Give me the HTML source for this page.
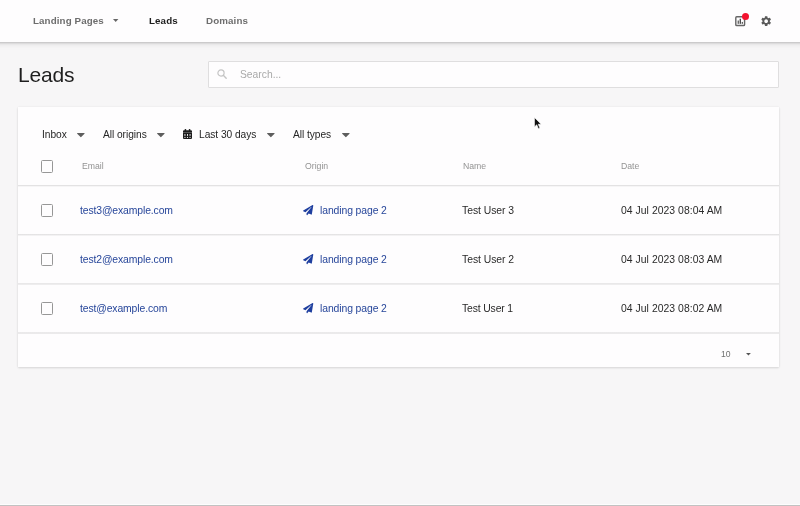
<!DOCTYPE html>
<html lang="en">
<head>
<meta charset="utf-8">
<title>Leads</title>
<style>
*{box-sizing:border-box;margin:0;padding:0}
html,body{width:800px;height:506px;overflow:hidden}
body{position:relative;background:#f7f6f7;font-family:"Liberation Sans",sans-serif;color:#222;-webkit-font-smoothing:antialiased}
.abs{position:absolute;white-space:nowrap;line-height:1;will-change:transform}
#topbar{position:absolute;left:-20px;top:0;width:840px;height:42px;background:#fefdfe;box-shadow:0 1px 2px rgba(0,0,0,.175),0 2px 6px rgba(0,0,0,.10)}
.nav{font-size:9.750px;letter-spacing:.12px;font-weight:bold;color:#6d6d6d;top:16px}
.nav.active{color:#1d1d1d}
h1{font-weight:normal;font-size:21px;letter-spacing:-.2px;color:#1e1e1e;left:18.300px;top:64px}
#search{position:absolute;left:208px;top:61px;width:571px;height:27px;background:#fefdfe;border:1px solid #dfdedf;border-radius:1px}
#search span{will-change:transform;position:absolute;left:31.300px;top:8px;font-size:10.300px;color:#a9a9a9;line-height:1}
#card{position:absolute;left:18px;top:107px;width:761px;height:260px;background:#fefdfe;box-shadow:0 1px 2px rgba(0,0,0,.12),0 0 2px rgba(0,0,0,.06)}
.filter{font-size:10.200px;letter-spacing:-.04px;color:#262626;top:130px}
.th{font-size:8.700px;color:#939393;top:162px}
.hr{position:absolute;left:18px;width:761px;height:2px}
.cb{position:absolute;left:40.700px;width:12.500px;height:12.400px;margin-top:.2px;border:1.500px solid #979797;border-radius:1.500px;background:#fefdfe}
.td{font-size:10.400px;color:#2a2a2a}
.c1{letter-spacing:-.12px}.c2{letter-spacing:-.1px}.c3{letter-spacing:-.04px}.c4{letter-spacing:.04px}
.link{color:#27469a}
.r1{top:206px}.r2{top:255px}.r3{top:304px}
svg{position:absolute;overflow:visible}
#bottomline1{position:absolute;left:0;top:504px;width:800px;height:1px;background:#fdfdfd}
#bottomline2{position:absolute;left:0;top:505px;width:800px;height:1px;background:#c2c2c2}
</style>
</head>
<body>
<div id="topbar"></div>
<div class="abs nav" style="left:33px">Landing Pages</div>
<svg style="left:112.700px;top:19.100px" width="5.400" height="2.900" viewBox="0 0 5.400 2.900"><path d="M0 0h5.400L2.700 2.900z" fill="#666"/></svg>
<div class="abs nav active" style="left:149px">Leads</div>
<div class="abs nav" style="left:206px">Domains</div>

<!-- report icon -->
<svg style="left:734.900px;top:15.700px" width="11.330" height="11.330" viewBox="0 0 12 12">
  <rect x="0.850" y="0.850" width="9.300" height="9.300" rx="1" fill="none" stroke="#666" stroke-width="1.500"/>
  <rect x="2.800" y="4.800" width="1.300" height="3.500" fill="#555"/>
  <rect x="4.900" y="2.900" width="1.400" height="5.400" fill="#444"/>
  <rect x="7.100" y="6.300" width="1.300" height="2" fill="#555"/>
</svg>
<div style="position:absolute;left:742px;top:13px;width:7px;height:7px;border-radius:50%;background:#f3132f"></div>
<!-- gear icon -->
<svg style="left:759.950px;top:14.500px" width="12.300" height="12.300" viewBox="0 0 24 24">
  <path fill="#5a5a5a" d="M19.14 12.94c.04-.3.06-.61.06-.94 0-.32-.02-.64-.07-.94l2.03-1.58a.49.49 0 0 0 .12-.61l-1.92-3.32a.488.488 0 0 0-.59-.22l-2.39.96c-.5-.38-1.03-.7-1.62-.94l-.36-2.54a.484.484 0 0 0-.48-.41h-3.84c-.24 0-.43.17-.47.41l-.36 2.54c-.59.24-1.13.57-1.62.94l-2.39-.96c-.22-.08-.47 0-.59.22L2.74 8.87c-.12.21-.08.47.12.61l2.03 1.58c-.05.3-.09.63-.09.94s.02.64.07.94l-2.03 1.58a.49.49 0 0 0-.12.61l1.92 3.32c.12.22.37.29.59.22l2.39-.96c.5.38 1.03.7 1.62.94l.36 2.54c.05.24.24.41.48.41h3.84c.24 0 .44-.17.47-.41l.36-2.54c.59-.24 1.13-.56 1.62-.94l2.39.96c.22.08.47 0 .59-.22l1.92-3.32c.12-.22.07-.47-.12-.61l-2.01-1.58zM12 15.6c-1.98 0-3.600-1.62-3.600-3.600s1.62-3.600 3.600-3.600 3.600 1.62 3.600 3.600-1.62 3.600-3.600 3.600z"/>
</svg>

<h1 class="abs">Leads</h1>
<div id="search">
  <svg style="left:7.800px;top:7.300px" width="10" height="10" viewBox="0 0 10 10"><circle cx="4" cy="4" r="3.100" fill="none" stroke="#c4c4c4" stroke-width="1.200"/><path d="M6.300 6.300 L9.200 9.200" stroke="#c4c4c4" stroke-width="1.400" stroke-linecap="round"/></svg>
  <span>Search...</span>
</div>

<div id="card"></div>
<div class="abs filter" style="left:42px">Inbox</div>
<svg style="left:77.2px;top:132.700px" width="7.700" height="4.300" viewBox="0 0 7.200 4.400" preserveAspectRatio="none"><path d="M.5 0h6.200a.4.400 0 0 1 .3.700L3.900 4.100a.4.400 0 0 1-.6 0L.2.700A.4.400 0 0 1 .5 0z" fill="#5e5e5e"/></svg>
<div class="abs filter" style="left:103px">All origins</div>
<svg style="left:157.2px;top:132.700px" width="7.700" height="4.300" viewBox="0 0 7.200 4.400" preserveAspectRatio="none"><path d="M.5 0h6.200a.4.400 0 0 1 .3.700L3.900 4.100a.4.400 0 0 1-.6 0L.2.700A.4.400 0 0 1 .5 0z" fill="#5e5e5e"/></svg>
<!-- calendar -->
<svg style="left:182.900px;top:129px" width="9" height="10.100" viewBox="0 0 9 10.100">
  <path fill="#1c1c1c" d="M1 1.300h7a1 1 0 0 1 1 1V3.400H0V2.300a1 1 0 0 1 1-1zM0 3.700h9V9.100a1 1 0 0 1-1 1H1a1 1 0 0 1-1-1z"/>
  <rect x="1.700" y="0" width="1.400" height="2.200" rx=".4" fill="#1c1c1c"/>
  <rect x="5.900" y="0" width="1.400" height="2.200" rx=".4" fill="#1c1c1c"/>
  <g fill="#fefdfe"><rect x="1.500" y="5" width=".9" height="1.900"/><rect x="4.050" y="5" width=".9" height="1.900"/><rect x="6.600" y="5" width=".9" height="1.900"/><rect x="1.400" y="7.900" width="1.100" height="1"/><rect x="3.950" y="7.900" width="1.100" height="1"/><rect x="6.500" y="7.900" width="1.100" height="1"/></g>
</svg>
<div class="abs filter" style="left:199px">Last 30 days</div>
<svg style="left:267.4px;top:132.700px" width="7.700" height="4.300" viewBox="0 0 7.200 4.400" preserveAspectRatio="none"><path d="M.5 0h6.200a.4.400 0 0 1 .3.700L3.900 4.100a.4.400 0 0 1-.6 0L.2.700A.4.400 0 0 1 .5 0z" fill="#5e5e5e"/></svg>
<div class="abs filter" style="left:293px">All types</div>
<svg style="left:342.4px;top:132.700px" width="7.700" height="4.300" viewBox="0 0 7.200 4.400" preserveAspectRatio="none"><path d="M.5 0h6.200a.4.400 0 0 1 .3.700L3.900 4.100a.4.400 0 0 1-.6 0L.2.700A.4.400 0 0 1 .5 0z" fill="#5e5e5e"/></svg>

<div class="cb" style="top:160px"></div>
<div class="abs th" style="left:82px">Email</div>
<div class="abs th" style="left:305px">Origin</div>
<div class="abs th" style="left:463px">Name</div>
<div class="abs th" style="left:621px">Date</div>
<div class="hr" style="top:185px;background:linear-gradient(rgba(222,221,222,0.85) 50%,rgba(222,221,222,0.25) 50%)"></div>

<div class="cb" style="top:204px"></div>
<div class="abs td link c1 r1" style="left:80px">test3@example.com</div>
<svg class="plane" style="left:303.200px;top:205px" width="10.300" height="10.300" viewBox="0 0 512 512"><path fill="#1f3f9f" d="M476 3.200L12.500 270.600c-18.100 10.400-15.800 35.600 2.200 43.200L121 358.400l287.300-253.200c5.500-4.900 13.300 2.600 8.600 8.300L176 407v80.500c0 23.600 28.500 32.900 42.500 15.800L282 426l124.600 52.200c14.200 6 30.400-2.900 33-18.200l72-432C515 7.800 493.300-6.800 476 3.200z"/></svg>
<div class="abs td link c2 r1" style="left:320.300px">landing page 2</div>
<div class="abs td c3 r1" style="left:462px">Test User 3</div>
<div class="abs td c4 r1" style="left:620.500px">04 Jul 2023 08:04 AM</div>
<div class="hr" style="top:234px;background:linear-gradient(rgba(222,221,222,0.80) 50%,rgba(222,221,222,0.35) 50%)"></div>

<div class="cb" style="top:253px"></div>
<div class="abs td link c1 r2" style="left:80px">test2@example.com</div>
<svg class="plane" style="left:303.200px;top:254px" width="10.300" height="10.300" viewBox="0 0 512 512"><path fill="#1f3f9f" d="M476 3.200L12.500 270.600c-18.100 10.400-15.800 35.600 2.200 43.200L121 358.400l287.300-253.200c5.500-4.900 13.300 2.600 8.600 8.300L176 407v80.500c0 23.600 28.500 32.900 42.500 15.800L282 426l124.600 52.200c14.200 6 30.400-2.900 33-18.200l72-432C515 7.800 493.300-6.800 476 3.200z"/></svg>
<div class="abs td link c2 r2" style="left:320.300px">landing page 2</div>
<div class="abs td c3 r2" style="left:462px">Test User 2</div>
<div class="abs td c4 r2" style="left:620.500px">04 Jul 2023 08:03 AM</div>
<div class="hr" style="top:283px;background:linear-gradient(rgba(222,221,222,0.65) 50%,rgba(222,221,222,0.50) 50%)"></div>

<div class="cb" style="top:302px"></div>
<div class="abs td link c1 r3" style="left:80px">test@example.com</div>
<svg class="plane" style="left:303.200px;top:303px" width="10.300" height="10.300" viewBox="0 0 512 512"><path fill="#1f3f9f" d="M476 3.200L12.500 270.600c-18.100 10.400-15.800 35.600 2.200 43.200L121 358.400l287.300-253.200c5.500-4.900 13.300 2.600 8.600 8.300L176 407v80.500c0 23.600 28.500 32.900 42.500 15.800L282 426l124.600 52.200c14.200 6 30.400-2.900 33-18.200l72-432C515 7.800 493.300-6.800 476 3.200z"/></svg>
<div class="abs td link c2 r3" style="left:320.300px">landing page 2</div>
<div class="abs td c3 r3" style="left:462px;letter-spacing:-.14px">Test User 1</div>
<div class="abs td c4 r3" style="left:620.500px">04 Jul 2023 08:02 AM</div>
<div class="hr" style="top:332px;background:linear-gradient(rgba(222,221,222,0.60) 50%,rgba(222,221,222,0.60) 50%)"></div>

<div class="abs" style="left:721.200px;top:350px;font-size:8.600px;color:#707070">10</div>
<svg style="left:746.300px;top:352.700px" width="4.900" height="2.600" viewBox="0 0 4.900 2.600"><path d="M0 0h4.900L2.450 2.600z" fill="#555"/></svg>

<!-- mouse cursor -->
<svg style="left:534px;top:117.300px" width="8.100" height="12.600" viewBox="0 0 9 14"><path d="M0.500 0.500V11L3 8.700 4.900 13 6.600 12.300 4.700 8.100H8z" fill="#111" stroke="#fff" stroke-width=".7" stroke-linejoin="round"/></svg>

<div id="bottomline1"></div><div id="bottomline2"></div>
</body>
</html>
